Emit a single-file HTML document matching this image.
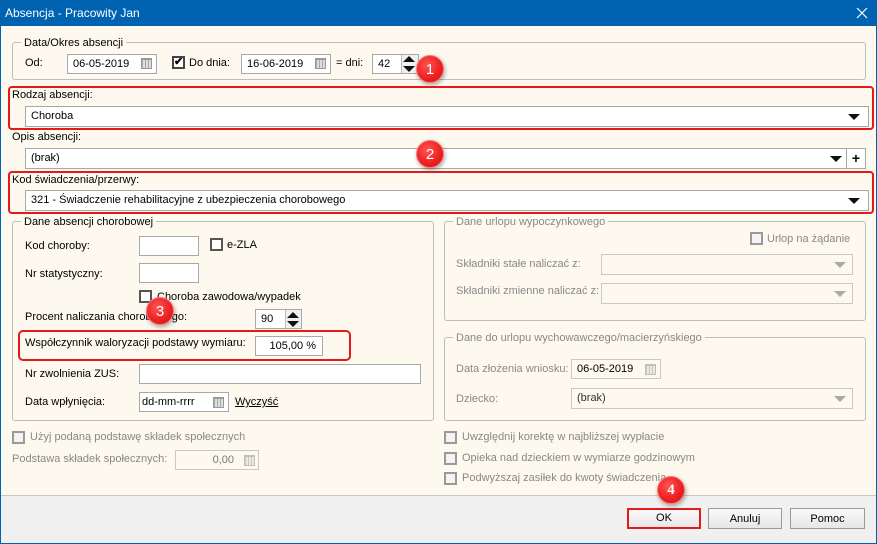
<!DOCTYPE html>
<html><head><meta charset="utf-8"><style>
*{box-sizing:border-box;margin:0;padding:0}
body{width:877px;height:544px;overflow:hidden;font-family:"Liberation Sans",sans-serif;font-size:11px;color:#000;background:#fdf9ee;position:relative}
.a{position:absolute;white-space:nowrap}
.title{left:0;top:0;width:877px;height:26px;background:#0063b1;color:#fff;font-size:12px;line-height:26px;padding-left:5px}
.frame{left:0;top:26px;width:877px;height:518px;border:1px solid #0063b1;border-top:none}
.grp{border:1px solid #bdbdbd;border-radius:3px}
.lg{background:#fdf9ee;padding:0 3px;line-height:14px}
.inp{background:#fff;border:1px solid #a8a8a8;line-height:18px;padding-left:5px}
.dis{background:#fdf9ee;border:1px solid #c8c8c8;color:#777}
.cb{width:13px;height:13px;border:2px solid #555;background:#fff}
.cbd{width:13px;height:13px;border:2px solid #999;background:#f4f4f4}
.g{color:#888}
.red{border:2px solid #e21a1a;border-radius:4px}
.badge{width:28px;height:28px;border-radius:50%;background:radial-gradient(circle at 40% 35%,#f55 0,#e22 55%,#c11 100%);border:1px solid #f77;color:#fff;font-size:15px;text-align:center;line-height:27px;box-shadow:1px 2px 4px rgba(0,0,0,.35)}
.tri{width:0;height:0;border-left:6px solid transparent;border-right:6px solid transparent;border-top:6px solid #111}
.trig{border-top-color:#aaa}
.cal{width:11px;height:11px;background:linear-gradient(#999,#999) 0 0/100% 1px no-repeat,repeating-linear-gradient(90deg,#aaa 0 1px,#ddd 1px 3px);border:1px solid #999}
.btn{border:1px solid #999;background:linear-gradient(#fafafa,#e6e6e6);text-align:center;line-height:20px}
</style></head><body>
<div class="a title">Absencja - Pracowity Jan</div>
<svg class="a" style="left:856px;top:7px" width="12" height="12"><path d="M1 1L11 11M11 1L1 11" stroke="#fff" stroke-width="1.2"/></svg>
<div class="a frame"></div>
<div class="a" style="left:1px;top:495px;width:875px;height:48px;background:#f0f0f0;border-top:1px solid #c8c8c8"></div>

<div class="a grp" style="left:12px;top:42px;width:854px;height:38px"></div>
<div class="a lg" style="left:21px;top:36px">Data/Okres absencji</div>
<div class="a" style="left:25px;top:57px">Od:</div>
<div class="a inp" style="left:67px;top:54px;width:90px;height:20px">06-05-2019</div>
<div class="a cal" style="left:141px;top:58px"></div>
<div class="a cb" style="left:172px;top:56px;border-color:#444"></div>
<div class="a" style="left:174px;top:55px;font-size:11px;font-weight:bold">✔</div>
<div class="a" style="left:189px;top:57px">Do dnia:</div>
<div class="a inp" style="left:241px;top:54px;width:90px;height:20px">16-06-2019</div>
<div class="a cal" style="left:315px;top:58px"></div>
<div class="a" style="left:336px;top:57px">= dni:</div>
<div class="a inp" style="left:372px;top:54px;width:47px;height:20px">42</div>
<div class="a" style="left:401px;top:55px;width:17px;height:18px;background:#f0f0f0;border-left:1px solid #bbb"></div>
<div class="a tri" style="left:403px;top:66px"></div>
<div class="a" style="left:403px;top:56px;width:0;height:0;border-left:6px solid transparent;border-right:6px solid transparent;border-bottom:6px solid #111"></div>
<div class="a badge" style="left:416px;top:55px">1</div>

<div class="a red" style="left:8px;top:86px;width:866px;height:44px"></div>
<div class="a" style="left:12px;top:89px">Rodzaj absencji:</div>
<div class="a inp" style="left:25px;top:106px;width:844px;height:21px">Choroba</div>
<div class="a tri" style="left:848px;top:114px"></div>

<div class="a" style="left:12px;top:131px">Opis absencji:</div>
<div class="a inp" style="left:25px;top:148px;width:822px;height:21px">(brak)</div>
<div class="a tri" style="left:830px;top:156px"></div>
<div class="a inp" style="left:846px;top:148px;width:20px;height:21px;padding:0;text-align:center;font-weight:bold;font-size:14px">+</div>
<div class="a badge" style="left:416px;top:140px">2</div>

<div class="a red" style="left:8px;top:171px;width:866px;height:43px"></div>
<div class="a" style="left:12px;top:174px">Kod świadczenia/przerwy:</div>
<div class="a inp" style="left:25px;top:190px;width:844px;height:21px">321 - Świadczenie rehabilitacyjne z ubezpieczenia chorobowego</div>
<div class="a tri" style="left:848px;top:198px"></div>

<div class="a grp" style="left:12px;top:221px;width:422px;height:200px"></div>
<div class="a lg" style="left:21px;top:215px">Dane absencji chorobowej</div>
<div class="a" style="left:25px;top:240px">Kod choroby:</div>
<div class="a inp" style="left:139px;top:236px;width:60px;height:20px"></div>
<div class="a cb" style="left:210px;top:238px"></div>
<div class="a" style="left:227px;top:239px">e-ZLA</div>
<div class="a" style="left:25px;top:268px">Nr statystyczny:</div>
<div class="a inp" style="left:139px;top:263px;width:60px;height:20px"></div>
<div class="a cb" style="left:139px;top:290px"></div>
<div class="a" style="left:157px;top:291px">Choroba zawodowa/wypadek</div>
<div class="a" style="left:25px;top:311px">Procent naliczania chorobowego:</div>
<div class="a inp" style="left:255px;top:309px;width:47px;height:20px">90</div>
<div class="a" style="left:285px;top:310px;width:16px;height:18px;background:#f0f0f0;border-left:1px solid #bbb"></div>
<div class="a" style="left:287px;top:312px;width:0;height:0;border-left:6px solid transparent;border-right:6px solid transparent;border-bottom:6px solid #111"></div>
<div class="a tri" style="left:287px;top:321px"></div>
<div class="a badge" style="left:146px;top:297px">3</div>
<div class="a red" style="left:18px;top:330px;width:333px;height:31px;border-radius:5px"></div>
<div class="a" style="left:25px;top:337px">Współczynnik waloryzacji podstawy wymiaru:</div>
<div class="a inp" style="left:255px;top:336px;width:68px;height:20px;text-align:right;padding-right:6px">105,00 %</div>
<div class="a" style="left:25px;top:368px">Nr zwolnienia ZUS:</div>
<div class="a inp" style="left:139px;top:364px;width:282px;height:20px"></div>
<div class="a" style="left:25px;top:396px">Data wpłynięcia:</div>
<div class="a inp" style="left:139px;top:392px;width:90px;height:20px;padding-left:2px">dd-mm-rrrr</div>
<div class="a cal" style="left:213px;top:397px"></div>
<div class="a" style="left:235px;top:396px;text-decoration:underline">Wyczyść</div>

<div class="a cbd" style="left:12px;top:431px"></div>
<div class="a g" style="left:30px;top:431px">Użyj podaną podstawę składek społecznych</div>
<div class="a g" style="left:12px;top:453px">Podstawa składek społecznych:</div>
<div class="a inp dis" style="left:175px;top:450px;width:84px;height:20px;text-align:right;padding-right:24px">0,00</div>
<div class="a cal" style="left:244px;top:455px;opacity:.6"></div>

<div class="a grp" style="left:444px;top:221px;width:422px;height:100px"></div>
<div class="a lg g" style="left:453px;top:215px">Dane urlopu wypoczynkowego</div>
<div class="a cbd" style="left:750px;top:232px"></div>
<div class="a g" style="left:767px;top:233px">Urlop na żądanie</div>
<div class="a g" style="left:456px;top:258px">Składniki stałe naliczać z:</div>
<div class="a inp dis" style="left:601px;top:254px;width:252px;height:21px"></div>
<div class="a tri trig" style="left:834px;top:262px"></div>
<div class="a g" style="left:456px;top:285px">Składniki zmienne naliczać z:</div>
<div class="a inp dis" style="left:601px;top:283px;width:252px;height:21px"></div>
<div class="a tri trig" style="left:834px;top:291px"></div>

<div class="a grp" style="left:444px;top:337px;width:422px;height:84px"></div>
<div class="a lg g" style="left:453px;top:331px">Dane do urlopu wychowawczego/macierzyńskiego</div>
<div class="a g" style="left:456px;top:363px">Data złożenia wniosku:</div>
<div class="a inp dis" style="left:571px;top:359px;width:90px;height:20px;color:#000">06-05-2019</div>
<div class="a cal" style="left:645px;top:364px;opacity:.6"></div>
<div class="a g" style="left:456px;top:393px">Dziecko:</div>
<div class="a inp dis" style="left:571px;top:388px;width:282px;height:21px;color:#333">(brak)</div>
<div class="a tri trig" style="left:834px;top:396px"></div>

<div class="a cbd" style="left:444px;top:431px"></div>
<div class="a g" style="left:462px;top:431px">Uwzględnij korektę w najbliższej wypłacie</div>
<div class="a cbd" style="left:444px;top:452px"></div>
<div class="a g" style="left:462px;top:452px">Opieka nad dzieckiem w wymiarze godzinowym</div>
<div class="a cbd" style="left:444px;top:472px"></div>
<div class="a g" style="left:462px;top:472px">Podwyższaj zasiłek do kwoty świadczenia</div>

<div class="a btn" style="left:627px;top:508px;width:74px;height:21px;border:2px solid #e21a1a;line-height:17px">OK</div>
<div class="a btn" style="left:708px;top:508px;width:74px;height:21px">Anuluj</div>
<div class="a btn" style="left:790px;top:508px;width:75px;height:21px">Pomoc</div>
<div class="a badge" style="left:657px;top:476px;font-family:'Liberation Serif',serif;font-weight:bold">4</div>
</body></html>
